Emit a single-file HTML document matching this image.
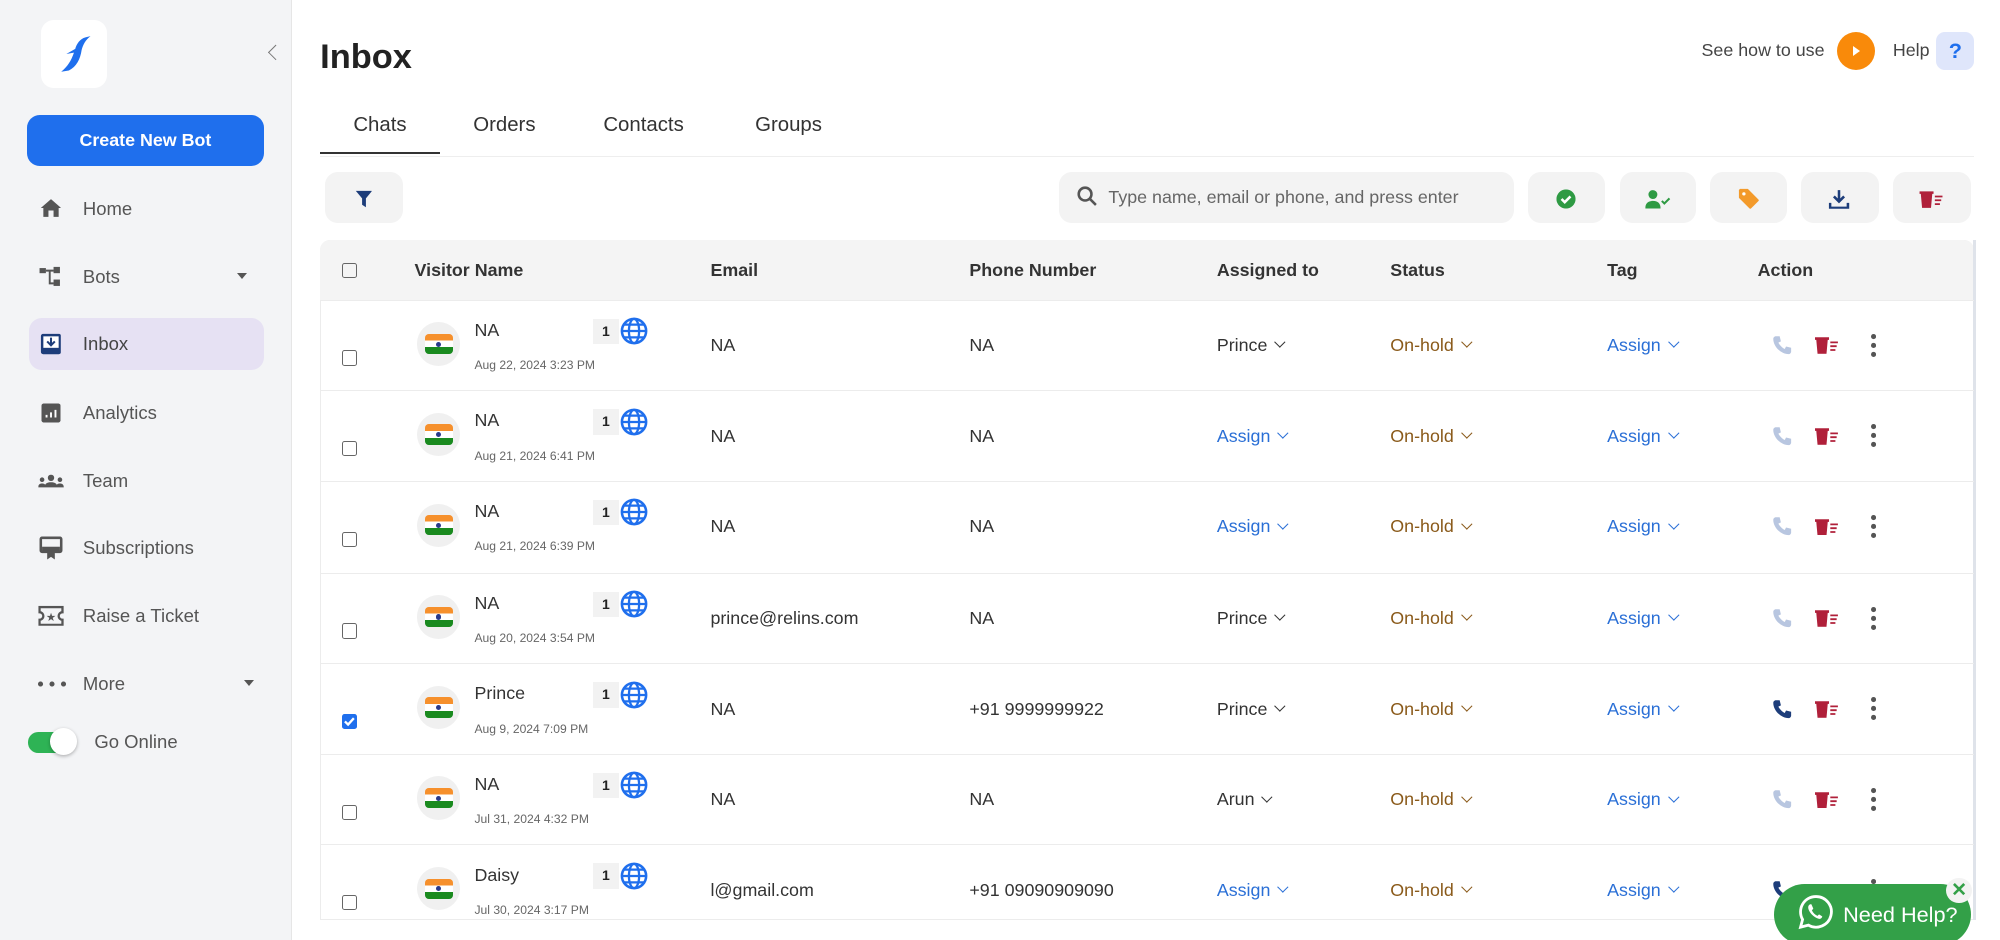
<!DOCTYPE html>
<html><head><meta charset="utf-8">
<style>
*{box-sizing:border-box;margin:0;padding:0}
html,body{width:2000px;height:940px;overflow:hidden;background:#fff}
#w{zoom:1.27551;width:1568px;height:737px;position:relative;font-family:"Liberation Sans",sans-serif;color:#222;overflow:hidden}
.a{position:absolute}
.side{left:0;top:0;width:229px;height:737px;background:#f3f4f6;border-right:1px solid #e6e6e6}
.nav{position:absolute;left:65px;font-size:14.5px;color:#555;transform:translateY(-50%)}
.ic{position:absolute;transform:translate(-50%,-50%)}
.tab{position:absolute;top:89px;font-size:16px;color:#333}
.btn{position:absolute;top:135px;height:40px;background:#f3f3f3;border-radius:10px}
.hd{position:absolute;top:204px;font-size:14px;color:#333;font-weight:bold}
.row{position:absolute;left:251px;width:1297px;height:71px;border-top:1px solid #ececec}
.row>*{position:absolute}
.cb{left:17px;top:39px;width:12px;height:12px;border:1.5px solid #666;border-radius:2px}
.av{left:76px;top:17px;width:34px;height:34px;border-radius:50%;background:#f0f0f0}
.fl{position:absolute;left:6px;top:9px;width:22px;height:16px;border-radius:3px;overflow:hidden;background:linear-gradient(#f6902c 0 33%,#fff 33% 66%,#1a8a1f 66%)}
.fl:after{content:"";position:absolute;left:9px;top:6px;width:4px;height:4px;border-radius:50%;background:#2a3a8a}
.nm{left:121px;top:15px;font-size:14px;color:#333}
.dt{left:121px;top:45px;font-size:9.5px;color:#666}
.bd{left:214px;top:14px;width:20px;height:20px;background:#f2f2f2;font-size:11px;font-weight:bold;text-align:center;line-height:20px}
.gl{left:235px;top:13px}
.c{top:27px;font-size:14px;color:#333}
.bl{color:#2a6fd6}.br{color:#8a5a1a}
.ch{display:inline-block;width:6px;height:6px;border-right:1.5px solid currentColor;border-bottom:1.5px solid currentColor;transform:rotate(45deg);margin-left:7px;position:relative;top:-4px}
</style></head><body><div id="w">
<div class="a side"></div>
<div class="a" style="left:32px;top:16px;width:52px;height:53px;background:#fff;border-radius:10px"></div>
<svg class="a" style="left:40px;top:24px" width="36" height="36" viewBox="0 0 36 36"><path d="M31 4 L27 5 C23 6 20 10 19 14 L12 18 L18 17 C16 23 13 28 8 32 L14 31 C20 28 23 22 24 15 C25 11 27 7 31 4Z" fill="#1f6fed"/></svg>
<div class="a" style="left:212px;top:37px;width:9px;height:9px;border-left:1.5px solid #777;border-bottom:1.5px solid #777;transform:rotate(45deg)"></div>
<div class="a" style="left:21px;top:90px;width:186px;height:40px;background:#1f6fed;border-radius:10px;color:#fff;font-size:14px;font-weight:bold;text-align:center;line-height:40px">Create New Bot</div>
<div class="a" style="left:23px;top:249px;width:184px;height:41px;background:#e6e1f3;border-radius:10px"></div>
<svg class="ic" style="left:40px;top:163px" width="16" height="14"><path d="M8 0L0 7h2v7h4V9h4v5h4V7h2z" fill="#555"/></svg>
<div class="nav" style="top:164px">Home</div>
<svg class="ic" style="left:40px;top:217px" width="18" height="16"><rect x="0" y="1" width="5" height="4" fill="#555"/><rect x="11" y="0" width="5" height="5" fill="#555"/><rect x="11" y="10" width="5" height="5" fill="#555"/><path d="M5 3h6M8 3v10h3" stroke="#555" stroke-width="1.5" fill="none"/></svg>
<div class="nav" style="top:217px">Bots</div>
<div class="a" style="left:186px;top:214px;border:4px solid transparent;border-top:5px solid #555"></div>
<svg class="ic" style="left:40px;top:270px" width="16" height="16"><rect width="16" height="16" rx="2" fill="#1d3d7a"/><rect x="2" y="2" width="12" height="9" fill="#fff"/><path d="M8 3v6M5 6l3 3 3-3" stroke="#1d3d7a" stroke-width="1.6" fill="none"/></svg>
<div class="nav" style="top:270px;color:#444">Inbox</div>
<svg class="ic" style="left:40px;top:324px" width="15" height="15"><rect width="15" height="15" rx="2" fill="#555"/><path d="M4 11v-2M7.5 11v-4M11 11V5" stroke="#fff" stroke-width="1.5"/></svg>
<div class="nav" style="top:324px">Analytics</div>
<svg class="ic" style="left:40px;top:377px" width="20" height="10"><circle cx="10" cy="2.5" r="2.5" fill="#555"/><circle cx="3" cy="4" r="1.8" fill="#555"/><circle cx="17" cy="4" r="1.8" fill="#555"/><path d="M5 10c0-3 2-4 5-4s5 1 5 4z M0 10c0-2 1-3 3-3s3 1 3 3z M14 10c0-2 1-3 3-3s3 1 3 3z" fill="#555"/></svg>
<div class="nav" style="top:377px">Team</div>
<svg class="ic" style="left:40px;top:430px" width="18" height="18"><rect x="1" y="1" width="16" height="11" rx="1" fill="none" stroke="#555" stroke-width="2"/><rect x="2" y="8" width="14" height="3" fill="#555"/><path d="M6 12v6l3-2 3 2v-6" fill="#555"/></svg>
<div class="nav" style="top:430px">Subscriptions</div>
<svg class="ic" style="left:40px;top:483px" width="20" height="16"><path d="M1 1h18v4a3 3 0 0 0 0 6v4H1v-4a3 3 0 0 0 0-6z" fill="none" stroke="#555" stroke-width="1.8"/><text x="10" y="12" font-size="9" text-anchor="middle" fill="#555">★</text></svg>
<div class="nav" style="top:483px">Raise a Ticket</div>
<svg class="ic" style="left:41px;top:536px" width="22" height="4"><circle cx="2" cy="2" r="2" fill="#555"/><circle cx="11" cy="2" r="2" fill="#555"/><circle cx="20" cy="2" r="2" fill="#555"/></svg>
<div class="nav" style="top:536px">More</div>
<div class="a" style="left:191px;top:533px;border:4px solid transparent;border-top:5px solid #555"></div>
<div class="a" style="left:22px;top:574px;width:36px;height:16px;border-radius:8px;background:#2eb355"></div>
<div class="a" style="left:39px;top:571px;width:21px;height:21px;border-radius:50%;background:#fff;box-shadow:0 1px 3px rgba(0,0,0,.3)"></div>
<div class="nav" style="top:582px;left:74px">Go Online</div>

<div class="a" style="left:251px;top:30px;font-size:27px;font-weight:bold;color:#222">Inbox</div>
<div class="a" style="left:1334px;top:31px;font-size:14px;color:#444">See how to use</div>
<div class="a" style="left:1440px;top:25px;width:30px;height:30px;border-radius:50%;background:#f98a0a"></div>
<div class="a" style="left:1453px;top:36px;border:4px solid transparent;border-left:6px solid #fff"></div>
<div class="a" style="left:1484px;top:31px;font-size:14px;color:#444">Help</div>
<div class="a" style="left:1518px;top:25px;width:30px;height:30px;border-radius:7px;background:#dfe6fb;color:#1f6fed;font-weight:bold;font-size:17px;text-align:center;line-height:30px">?</div>

<div class="tab" style="left:277px">Chats</div>
<div class="tab" style="left:371px">Orders</div>
<div class="tab" style="left:473px">Contacts</div>
<div class="tab" style="left:592px">Groups</div>
<div class="a" style="left:251px;top:122px;width:1297px;height:1px;background:#eee"></div>
<div class="a" style="left:251px;top:119px;width:94px;height:2px;background:#333"></div>

<div class="btn" style="left:255px;width:61px"></div>
<svg class="ic" style="left:285px;top:156px" width="13" height="13"><path d="M0 0h13L8 6v7L5 11V6z" fill="#1d3d7a"/></svg>
<div class="btn" style="left:830px;width:357px"></div>
<svg class="ic" style="left:852px;top:154px" width="16" height="16"><circle cx="6.5" cy="6.5" r="5" fill="none" stroke="#555" stroke-width="2"/><path d="M10 10l5 5" stroke="#555" stroke-width="2"/></svg>
<div class="a" style="left:869px;top:147px;font-size:14px;color:#666">Type name, email or phone, and press enter</div>
<div class="btn" style="left:1198px;width:60px"></div>
<svg class="ic" style="left:1228px;top:156px" width="15" height="15"><circle cx="7.5" cy="7.5" r="7.5" fill="#2e9a43"/><path d="M4 7.5l2.5 2.5 4.5-4.5" stroke="#fff" stroke-width="2" fill="none"/></svg>
<div class="btn" style="left:1270px;width:60px"></div>
<svg class="ic" style="left:1300px;top:156px" width="20" height="15"><circle cx="6" cy="4" r="3.5" fill="#2e9a43"/><path d="M0 15c0-4 2-6 6-6s6 2 6 6z" fill="#2e9a43"/><path d="M13 9l2 2 4-4" stroke="#2e9a43" stroke-width="1.6" fill="none"/></svg>
<div class="btn" style="left:1341px;width:60px"></div>
<svg class="ic" style="left:1371px;top:156px" width="16" height="16"><path d="M0 1v6l9 9 7-7-9-9H1z" fill="#f39a2a"/><circle cx="4" cy="4" r="1.3" fill="#fff"/></svg>
<div class="btn" style="left:1412px;width:61px"></div>
<svg class="ic" style="left:1442px;top:156px" width="16" height="16"><path d="M8 1v9M4 6l4 4 4-4M1 11v4h14v-4" stroke="#1d3d7a" stroke-width="2" fill="none"/></svg>
<div class="btn" style="left:1484px;width:61px"></div>
<svg class="ic" style="left:1514px;top:156px" width="18" height="14"><path d="M0 1h11v2H0zM1 3h9l-1 11H2z" fill="#b0203a"/><path d="M12 5h6M12 8h5M12 11h4" stroke="#b0203a" stroke-width="1.4"/></svg>

<div class="a" style="left:251px;top:188px;width:1297px;height:533px;border:1px solid #ececec;border-radius:8px 8px 0 0"></div>
<div class="a" style="left:251px;top:188px;width:1297px;height:47px;background:#f4f4f4;border-radius:8px 8px 0 0"></div>
<div class="a" style="left:268px;top:206px;width:12px;height:12px;border:1.5px solid #666;border-radius:2px"></div>
<div class="hd" style="left:325px">Visitor Name</div>
<div class="hd" style="left:557px">Email</div>
<div class="hd" style="left:760px">Phone Number</div>
<div class="hd" style="left:954px">Assigned to</div>
<div class="hd" style="left:1090px">Status</div>
<div class="hd" style="left:1260px">Tag</div>
<div class="hd" style="left:1378px">Action</div>
<div class="a" style="left:1547px;top:188px;width:2px;height:533px;background:#dfe3ea"></div>

<svg width="0" height="0" style="position:absolute"><defs>
<symbol id="g" viewBox="0 0 22 22"><circle cx="11" cy="11" r="9.5" fill="none" stroke="#1f6fed" stroke-width="2"/><ellipse cx="11" cy="11" rx="4" ry="9.5" fill="none" stroke="#1f6fed" stroke-width="1.8"/><path d="M1.5 11h19M3 6h16M3 16h16" stroke="#1f6fed" stroke-width="1.8"/></symbol>
<symbol id="p" viewBox="0 0 16 16"><path d="M3 1l3 0 1 4-2 1c1 2 3 4 5 5l1-2 4 1v3c0 1-1 2-2 2C7 15 1 9 1 3c0-1 1-2 2-2z"/></symbol>
<symbol id="t" viewBox="0 0 18 14"><path d="M0 1h11v2H0zM1 3h9l-1 11H2z" fill="#b0203a"/><path d="M12 5h6M12 8h5M12 11h4" stroke="#b0203a" stroke-width="1.4"/></symbol>
</defs></svg>

<div class="row" style="top:235px"><div class="cb"></div><div class="av"><div class="fl"></div></div><div class="nm">NA</div><div class="dt">Aug 22, 2024 3:23 PM</div><div class="bd">1</div><svg class="gl" width="22" height="22"><use href="#g"/></svg><div class="c" style="left:306px">NA</div><div class="c" style="left:509px">NA</div><div class="c" style="left:703px">Prince<span class="ch"></span></div><div class="c br" style="left:839px">On-hold<span class="ch"></span></div><div class="c bl" style="left:1009px">Assign<span class="ch"></span></div><svg style="left:1138px;top:27px" width="16" height="16" fill="#b8c6e0"><use href="#p"/></svg><svg style="left:1172px;top:28px" width="18" height="14"><use href="#t"/></svg><svg style="left:1216px;top:26px" width="4" height="18" fill="#555"><circle cx="2" cy="2" r="2"/><circle cx="2" cy="9" r="2"/><circle cx="2" cy="16" r="2"/></svg></div>

<div class="row" style="top:306px"><div class="cb"></div><div class="av"><div class="fl"></div></div><div class="nm">NA</div><div class="dt">Aug 21, 2024 6:41 PM</div><div class="bd">1</div><svg class="gl" width="22" height="22"><use href="#g"/></svg><div class="c" style="left:306px">NA</div><div class="c" style="left:509px">NA</div><div class="c bl" style="left:703px">Assign<span class="ch"></span></div><div class="c br" style="left:839px">On-hold<span class="ch"></span></div><div class="c bl" style="left:1009px">Assign<span class="ch"></span></div><svg style="left:1138px;top:27px" width="16" height="16" fill="#b8c6e0"><use href="#p"/></svg><svg style="left:1172px;top:28px" width="18" height="14"><use href="#t"/></svg><svg style="left:1216px;top:26px" width="4" height="18" fill="#555"><circle cx="2" cy="2" r="2"/><circle cx="2" cy="9" r="2"/><circle cx="2" cy="16" r="2"/></svg></div>

<div class="row" style="top:377px"><div class="cb"></div><div class="av"><div class="fl"></div></div><div class="nm">NA</div><div class="dt">Aug 21, 2024 6:39 PM</div><div class="bd">1</div><svg class="gl" width="22" height="22"><use href="#g"/></svg><div class="c" style="left:306px">NA</div><div class="c" style="left:509px">NA</div><div class="c bl" style="left:703px">Assign<span class="ch"></span></div><div class="c br" style="left:839px">On-hold<span class="ch"></span></div><div class="c bl" style="left:1009px">Assign<span class="ch"></span></div><svg style="left:1138px;top:27px" width="16" height="16" fill="#b8c6e0"><use href="#p"/></svg><svg style="left:1172px;top:28px" width="18" height="14"><use href="#t"/></svg><svg style="left:1216px;top:26px" width="4" height="18" fill="#555"><circle cx="2" cy="2" r="2"/><circle cx="2" cy="9" r="2"/><circle cx="2" cy="16" r="2"/></svg></div>

<div class="row" style="top:449px"><div class="cb"></div><div class="av"><div class="fl"></div></div><div class="nm">NA</div><div class="dt">Aug 20, 2024 3:54 PM</div><div class="bd">1</div><svg class="gl" width="22" height="22"><use href="#g"/></svg><div class="c" style="left:306px">prince@relins.com</div><div class="c" style="left:509px">NA</div><div class="c" style="left:703px">Prince<span class="ch"></span></div><div class="c br" style="left:839px">On-hold<span class="ch"></span></div><div class="c bl" style="left:1009px">Assign<span class="ch"></span></div><svg style="left:1138px;top:27px" width="16" height="16" fill="#b8c6e0"><use href="#p"/></svg><svg style="left:1172px;top:28px" width="18" height="14"><use href="#t"/></svg><svg style="left:1216px;top:26px" width="4" height="18" fill="#555"><circle cx="2" cy="2" r="2"/><circle cx="2" cy="9" r="2"/><circle cx="2" cy="16" r="2"/></svg></div>

<div class="row" style="top:520px"><div class="cb" style="background:#1f6fed;border-color:#1f6fed"><svg width="10" height="10" style="position:absolute;left:0;top:0"><path d="M1.5 5l2.5 2.5 4.5-5" stroke="#fff" stroke-width="1.8" fill="none"/></svg></div><div class="av"><div class="fl"></div></div><div class="nm">Prince</div><div class="dt">Aug 9, 2024 7:09 PM</div><div class="bd">1</div><svg class="gl" width="22" height="22"><use href="#g"/></svg><div class="c" style="left:306px">NA</div><div class="c" style="left:509px">+91 9999999922</div><div class="c" style="left:703px">Prince<span class="ch"></span></div><div class="c br" style="left:839px">On-hold<span class="ch"></span></div><div class="c bl" style="left:1009px">Assign<span class="ch"></span></div><svg style="left:1138px;top:27px" width="16" height="16" fill="#1d3d7a"><use href="#p"/></svg><svg style="left:1172px;top:28px" width="18" height="14"><use href="#t"/></svg><svg style="left:1216px;top:26px" width="4" height="18" fill="#555"><circle cx="2" cy="2" r="2"/><circle cx="2" cy="9" r="2"/><circle cx="2" cy="16" r="2"/></svg></div>

<div class="row" style="top:591px"><div class="cb"></div><div class="av"><div class="fl"></div></div><div class="nm">NA</div><div class="dt">Jul 31, 2024 4:32 PM</div><div class="bd">1</div><svg class="gl" width="22" height="22"><use href="#g"/></svg><div class="c" style="left:306px">NA</div><div class="c" style="left:509px">NA</div><div class="c" style="left:703px">Arun<span class="ch"></span></div><div class="c br" style="left:839px">On-hold<span class="ch"></span></div><div class="c bl" style="left:1009px">Assign<span class="ch"></span></div><svg style="left:1138px;top:27px" width="16" height="16" fill="#b8c6e0"><use href="#p"/></svg><svg style="left:1172px;top:28px" width="18" height="14"><use href="#t"/></svg><svg style="left:1216px;top:26px" width="4" height="18" fill="#555"><circle cx="2" cy="2" r="2"/><circle cx="2" cy="9" r="2"/><circle cx="2" cy="16" r="2"/></svg></div>

<div class="row" style="top:662px"><div class="cb"></div><div class="av"><div class="fl"></div></div><div class="nm">Daisy</div><div class="dt">Jul 30, 2024 3:17 PM</div><div class="bd">1</div><svg class="gl" width="22" height="22"><use href="#g"/></svg><div class="c" style="left:306px">l@gmail.com</div><div class="c" style="left:509px">+91 09090909090</div><div class="c bl" style="left:703px">Assign<span class="ch"></span></div><div class="c br" style="left:839px">On-hold<span class="ch"></span></div><div class="c bl" style="left:1009px">Assign<span class="ch"></span></div><svg style="left:1138px;top:27px" width="16" height="16" fill="#1d3d7a"><use href="#p"/></svg><svg style="left:1216px;top:26px" width="4" height="18" fill="#555"><circle cx="2" cy="2" r="2"/><circle cx="2" cy="9" r="2"/><circle cx="2" cy="16" r="2"/></svg></div>

<div class="a" style="left:1391px;top:693px;width:154px;height:48px;border-radius:24px;background:#33a048"></div>
<svg class="a" style="left:1410px;top:701px" width="28" height="28" viewBox="0 0 28 28"><path d="M14 2a12 12 0 0 0-10.4 18L2 26l6.2-1.6A12 12 0 1 0 14 2z" fill="none" stroke="#fff" stroke-width="2.2"/><path d="M10 8c-1 0-2 1-2 2.5 0 3 4 8 8.5 9 1.5 0 2.5-1 2.5-2l-2.5-1.5-1.2 1.2c-2-1-3.5-2.5-4.4-4.4L12 11.5 10.5 8z" fill="#fff"/></svg>
<div class="a" style="left:1445px;top:707px;font-size:17px;color:#fff">Need Help?</div>
<div class="a" style="left:1526px;top:688px;width:20px;height:20px;border-radius:50%;background:#f3f3f3;color:#33a048;font-size:15px;font-weight:bold;text-align:center;line-height:20px">✕</div>
</div></body></html>
